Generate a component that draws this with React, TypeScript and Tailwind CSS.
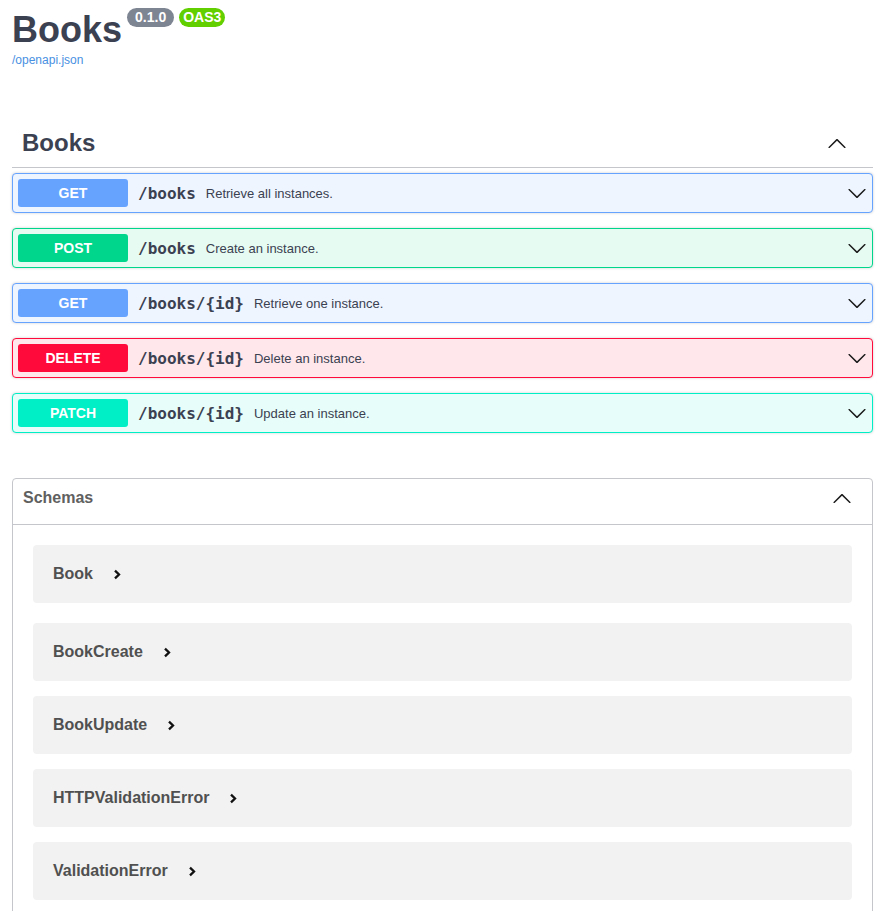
import React from "react";

const sans = { fontFamily: '"Liberation Sans", Arial, sans-serif' };

function ArrowDown() {
  return (
    <svg width="20" height="20" viewBox="0 0 20 20" className="shrink-0">
      <path
        fill="#1a1a1a"
        d="M17.418 6.109c.272-.268.709-.268.979 0s.271.701 0 .969l-7.908 7.83c-.27.268-.707.268-.979 0l-7.908-7.83c-.27-.268-.27-.701 0-.969.271-.268.709-.268.979 0L10 13.25l7.418-7.141z"
      />
    </svg>
  );
}

function ArrowUp() {
  return (
    <svg width="20" height="20" viewBox="0 0 20 20" className="shrink-0">
      <path
        fill="#1a1a1a"
        d="M17.418 14.908c.272.268.709.268.979 0s.271-.701 0-.969l-7.908-7.83c-.27-.268-.707-.268-.979 0l-7.908 7.830c-.27.268-.27.701 0 .969.271.268.709.268.979 0L10 7.767l7.418 7.141z"
      />
    </svg>
  );
}

function Chevron() {
  return (
    <svg width="8" height="11" viewBox="0 0 8 11" className="shrink-0">
      <polyline points="2,1.6 6,5.5 2,9.4" fill="none" stroke="#111" strokeWidth="2.3" />
    </svg>
  );
}

type Op = { method: string; path: string; desc: string; wrap: string; badge: string };

const ops: Op[] = [
  { method: "GET", path: "/books", desc: "Retrieve all instances.", wrap: "border-[#66a3ff] bg-[#eef5ff]", badge: "bg-[#66a3ff]" },
  { method: "POST", path: "/books", desc: "Create an instance.", wrap: "border-[#00d68c] bg-[#e6fbf2]", badge: "bg-[#00d68c]" },
  { method: "GET", path: "/books/{id}", desc: "Retrieve one instance.", wrap: "border-[#66a3ff] bg-[#eef5ff]", badge: "bg-[#66a3ff]" },
  { method: "DELETE", path: "/books/{id}", desc: "Delete an instance.", wrap: "border-[#ff0a3a] bg-[#ffe7eb]", badge: "bg-[#ff0a3a]" },
  { method: "PATCH", path: "/books/{id}", desc: "Update an instance.", wrap: "border-[#00efc6] bg-[#e6fdf9]", badge: "bg-[#00efc6]" },
];

const models: { name: string; mt: string }[] = [
  { name: "Book", mt: "mt-0" },
  { name: "BookCreate", mt: "mt-[20px]" },
  { name: "BookUpdate", mt: "mt-[15px]" },
  { name: "HTTPValidationError", mt: "mt-[15px]" },
  { name: "ValidationError", mt: "mt-[15px]" },
];

export default function App() {
  return (
    <div className="min-h-screen bg-white text-[#3b4151] pl-[12px] pr-[10px] pb-[40px] w-[883px]" style={sans}>
      {/* Info */}
      <div className="flex items-start h-[50px]">
        <h1 className="text-[36px] font-bold leading-[41px] mt-[9px] text-[#3b4151]">Books</h1>
        <div className="flex mt-[8px] ml-[5px] gap-[5px]">
          <span className="h-[19px] rounded-full bg-[#7d8492] text-white text-[14px] font-bold leading-[19px] px-[8px]">0.1.0</span>
          <span className="h-[19px] rounded-full bg-[#62cf00] text-white text-[14px] font-bold leading-[19px] px-[4px]">OAS3</span>
        </div>
      </div>
      <div className="mt-[3px] h-[14px] text-[12px] leading-[14px] text-[#4990e2]">/openapi.json</div>

      {/* Tag section */}
      <div className="mt-[51px] h-[50px] flex items-center border-b border-[#c4c6cb] pl-[10px] pr-[26px]">
        <span className="text-[24px] font-bold text-[#3b4151]">Books</span>
        <span className="ml-auto"><ArrowUp /></span>
      </div>

      <div className="mt-[5px] flex flex-col gap-[15px]">
        {ops.map((o, i) => (
          <div
            key={i}
            className={`h-[40px] flex items-center border rounded-[4px] p-[5px] shadow-[0_0_3px_rgba(0,0,0,0.19)] ${o.wrap}`}
          >
            <div className={`w-[110px] h-[28px] rounded-[3px] flex items-center justify-center text-white text-[14px] font-bold ${o.badge}`}>
              {o.method}
            </div>
            <span
              className="px-[10px] pt-[1px] text-[16px] font-bold text-[#3b4151]"
              style={{ fontFamily: '"DejaVu Sans Mono", monospace' }}
            >
              {o.path}
            </span>
            <span className="text-[13px] pt-[2px] text-[#3b4151]">{o.desc}</span>
            <span className="ml-auto"><ArrowDown /></span>
          </div>
        ))}
      </div>

      {/* Schemas */}
      <div className="mt-[45px] border border-[#c4c6cb] rounded-[4px]">
        <div className="h-[46px] flex items-center border-b border-[#c4c6cb] pl-[10px] pr-[20px] pb-[7px]">
          <span className="text-[16px] font-bold text-[#606060]">Schemas</span>
          <span className="ml-auto"><ArrowUp /></span>
        </div>
        <div className="px-[20px] pt-[20px] pb-[20px] flex flex-col">
          {models.map((m) => (
            <div
              key={m.name}
              className={`h-[58px] rounded-[4px] bg-[#f2f2f2] flex items-center pl-[20px] ${m.mt}`}
            >
              <span className="text-[16px] font-bold text-[#505050]">{m.name}</span>
              <span className="ml-[20px]"><Chevron /></span>
            </div>
          ))}
        </div>
      </div>
    </div>
  );
}
